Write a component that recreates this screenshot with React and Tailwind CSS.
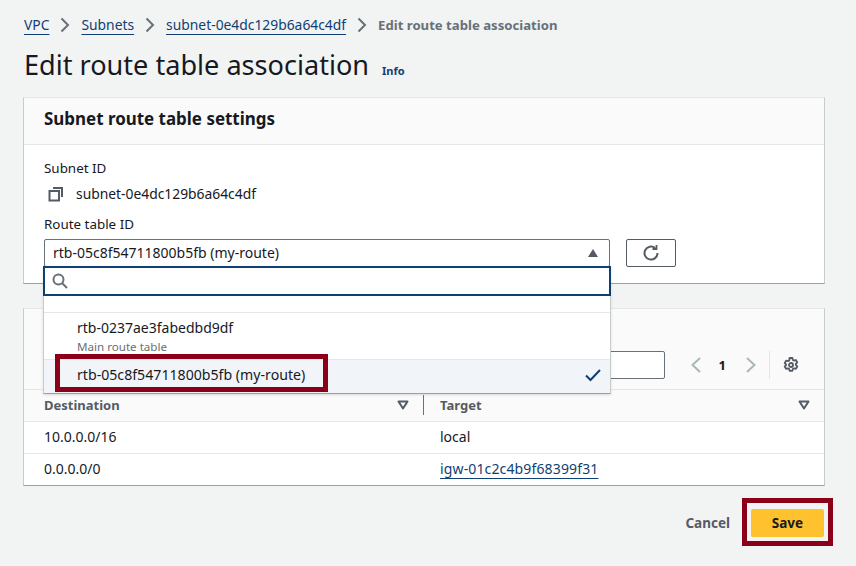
import React from "react";

const Chevron = () => (
  <svg width="16" height="16" viewBox="0 0 16 16" fill="none" stroke="#687078" strokeWidth="2" className="mx-[8px] shrink-0"><path d="M4.5 1.5 11 8 4.5 14.5" /></svg>
);
const Caret = ({ up, filled }) => (
  <svg width="12" height="10" viewBox="0 0 12 10" fill={filled ? "#545b64" : "none"} stroke="#545b64" strokeWidth={filled ? 0 : 2} strokeLinejoin="round">
    <path d={up ? "M6 1 11 9H1Z" : "M1.5 1.5H10.5L6 8.5Z"} />
  </svg>
);

export default function App() {
  return (
    <div className="relative w-[856px] h-[566px] overflow-hidden bg-[#f2f3f3] text-[#16191f] text-[14px] leading-[20px] font-['Noto_Sans','Open_Sans',sans-serif]">
      <div className="px-[24px] pt-[15px]">
        <nav className="flex items-center h-[20px] text-[13.85px] text-[#0f3f73]">
          <a className="underline underline-offset-[4px] decoration-[#0f3f73]">VPC</a>
          <Chevron />
          <a className="underline underline-offset-[4px]">Subnets</a>
          <Chevron />
          <a className="underline underline-offset-[4px]">subnet-0e4dc129b6a64c4df</a>
          <Chevron />
          <span className="font-bold text-[#687078] text-[13.15px]">Edit route table association</span>
        </nav>
        <div className="flex items-baseline mt-[10px] h-[40px]">
          <h1 className="text-[27.1px] leading-[40px] font-normal">Edit route table association</h1>
          <span className="ml-[13px] text-[11px] font-bold text-[#0f3f73]">Info</span>
        </div>
      </div>

      <div className="relative mx-[23px] mt-[12px] w-[802px]">
        <section className="h-[187px] bg-white border-x border-b border-[#c6cbcb] border-b-[#9ba0a0] border-t border-t-[#e5e7e7]">
          <div className="h-[47px] bg-[#fafafa] border-b border-[#e5e7e7] px-[20px] pb-[5px] flex items-center">
            <h2 className="text-[16.95px] font-bold">Subnet route table settings</h2>
          </div>
          <div className="px-[20px] pt-[13px]">
            <div className="h-[20px] text-[13.4px] leading-[20px]">Subnet ID</div>
            <div className="flex items-center h-[32px] text-[13.85px]">
              <svg width="16" height="16" viewBox="0 0 16 16" fill="none" stroke="#545b64" strokeWidth="2" className="ml-[4px] mr-[12px]">
                <rect x="1.5" y="5" width="9.5" height="9.5" />
                <path d="M5 2h9v9" />
              </svg>
              <span>subnet-0e4dc129b6a64c4df</span>
            </div>
            <div className="h-[20px] mt-[4px] text-[13.4px]">Route table ID</div>
            <div className="flex items-center mt-[5px]">
              <div className="w-[566px] h-[28px] bg-white border border-[#687078] rounded-[2px] flex items-center justify-between pl-[8px] pr-[10px]">
                <span>rtb-05c8f54711800b5fb (my-route)</span>
                <Caret up filled />
              </div>
              <button className="ml-[16px] w-[50px] h-[28px] border border-[#545b64] rounded-[2px] flex items-center justify-center">
                <svg width="18" height="18" viewBox="0 0 18 18" fill="none" stroke="#545b64" strokeWidth="2">
                  <path d="M15.5 9a6.5 6.5 0 1 1-2.4-5" />
                  <path d="M14.5 1v4h-4" strokeWidth="1.8" />
                </svg>
              </button>
            </div>
          </div>
        </section>

        <section className="mt-[24px] h-[178px] bg-white border-x border-b border-[#c6cbcb] border-b-[#9ba0a0] border-t border-t-[#e5e7e7]">
          <div className="h-[81px] bg-[#fafafa] border-b border-[#e5e7e7] flex items-end pb-[10px] pr-[25px] justify-end">
            <div className="w-[120px] h-[28px] bg-white border border-[#687078] rounded-[2px]" />
            <div className="flex items-center h-[28px] ml-[25px]">
              <svg width="12" height="16" viewBox="0 0 12 16" fill="none" stroke="#aab7b8" strokeWidth="2"><path d="M10 1 2.5 8 10 15" /></svg>
              <span className="ml-[17px] mr-[19px] font-bold text-[13px]">1</span>
              <svg width="12" height="16" viewBox="0 0 12 16" fill="none" stroke="#aab7b8" strokeWidth="2"><path d="M2 1 9.5 8 2 15" /></svg>
              <div className="w-px h-[28px] bg-[#e5e7e7] ml-[12px] mr-[13px]" />
              <svg width="16" height="16" viewBox="0 0 16 16" fill="none" stroke="#545b64" strokeWidth="1.8">
                <circle cx="8" cy="8" r="2" />
                <path d="M6.6 1h2.8l.4 1.9 1.3.7 1.8-.6 1.4 2.4-1.4 1.3v1.5l1.4 1.3-1.4 2.4-1.8-.6-1.3.7-.4 1.9H6.6l-.4-1.9-1.3-.7-1.8.6-1.4-2.4 1.4-1.3V7.3L1.7 6l1.4-2.4 1.8.6 1.3-.7Z" strokeLinejoin="round" />
              </svg>
            </div>
          </div>
          <div className="h-[32px] bg-[#fafafa] border-b border-[#e5e7e7] grid grid-cols-[399px_1fr] items-center font-bold text-[#545b64] text-[13px] pb-[2px]">
            <div className="flex items-center justify-between pl-[20px] pr-[14px]">
              <span>Destination</span>
              <Caret />
            </div>
            <div className="flex items-center justify-between h-[20px] border-l border-[#687078] pl-[16px] pr-[14px]">
              <span>Target</span>
              <Caret />
            </div>
          </div>
          <div className="h-[32px] border-b border-[#e5e7e7] grid grid-cols-[399px_1fr] items-center pb-[2px]">
            <div className="pl-[20px]">10.0.0.0/16</div>
            <div className="pl-[17px]">local</div>
          </div>
          <div className="h-[32px] grid grid-cols-[399px_1fr] items-center pb-[2px]">
            <div className="pl-[20px]">0.0.0.0/0</div>
            <div className="pl-[17px]">
              <a className="text-[#0f3f73] underline underline-offset-[4px] tracking-[0.01em]">igw-01c2c4b9f68399f31</a>
            </div>
          </div>
        </section>

        <div className="absolute left-[20px] top-[169px] w-[568px] h-[128px] bg-white border-x border-b border-[#c6cbcb] border-b-[#9ba0a0] shadow-sm">
          <div className="h-[30px] -mx-px border-2 border-[#0f3f73] bg-white flex items-center pl-[7px] w-[568px]">
            <svg width="16" height="16" viewBox="0 0 16 16" fill="none" stroke="#687078" strokeWidth="2"><circle cx="6.5" cy="6.5" r="5" /><path d="m10.5 10.5 4.5 4.5" /></svg>
          </div>
          <div className="h-[17px] border-b border-[#e5e7e7]" />
          <div className="h-[46px] pl-[33px] pt-[5px]">
            <div className="leading-[20px]">rtb-0237ae3fabedbd9df</div>
            <div className="text-[11.6px] leading-[16px] text-[#687078] mt-[1px]">Main route table</div>
          </div>
          <div className="h-[34px] bg-[#f1f5f9] border-t border-[#e5e7e7] flex items-center justify-between pl-[33px] pr-[9px] pb-[3px] text-[14.15px]">
            <span>rtb-05c8f54711800b5fb (my-route)</span>
            <svg width="16" height="14" viewBox="0 0 16 14" fill="none" stroke="#0f3f73" strokeWidth="2"><path d="M1 7.5 5.5 12 15 2" /></svg>
          </div>
        </div>
      </div>

      <div className="flex items-center justify-end mt-[23px] pr-[32px] h-[28px]">
        <span className="font-bold text-[#545b64] text-[13.5px] mr-[21px]">Cancel</span>
        <button className="w-[73px] h-[28px] bg-[#ffc12e] rounded-[2px] font-bold text-[13.5px]">Save</button>
      </div>

      <div className="absolute left-[55px] top-[354px] w-[273px] h-[38px] border-[5px] border-[#8b0018]" />
      <div className="absolute left-[742px] top-[498px] w-[91px] h-[48px] border-[5px] border-[#8b0018]" />
    </div>
  );
}
